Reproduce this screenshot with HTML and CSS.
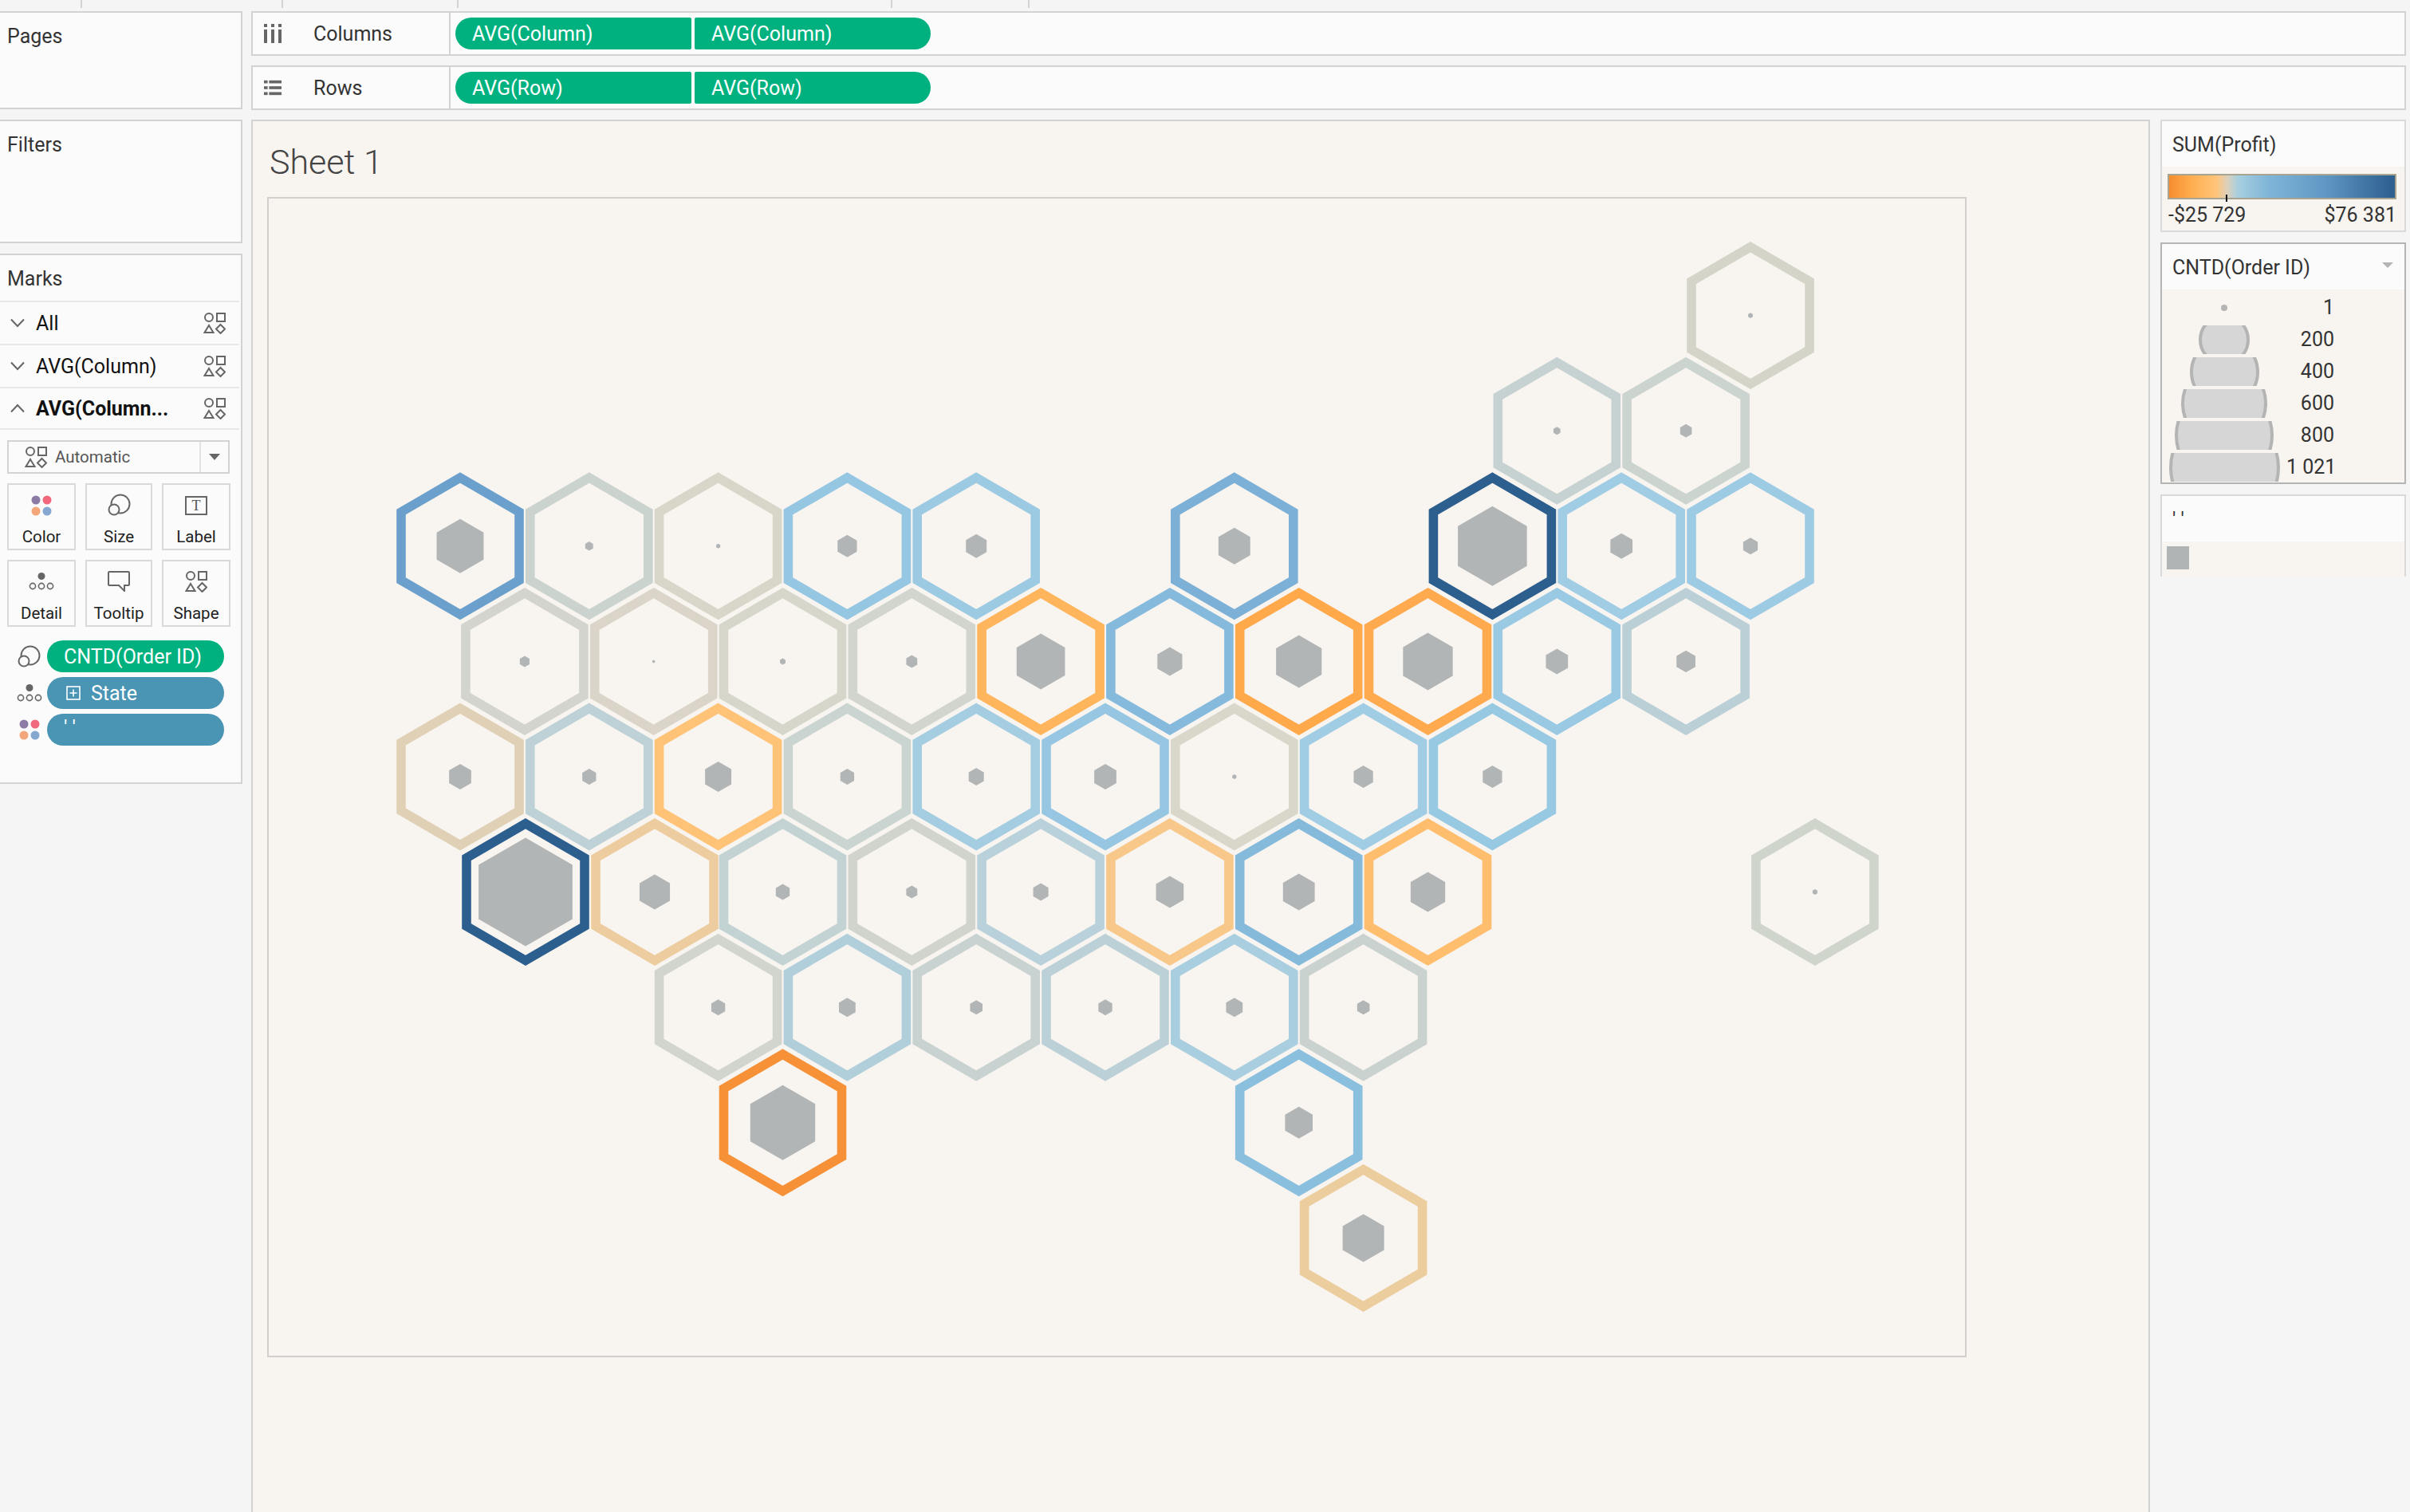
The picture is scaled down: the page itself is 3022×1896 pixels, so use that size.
FILE: index.html
```html
<!DOCTYPE html>
<html lang="en">
<head>
<meta charset="utf-8">
<title>Sheet 1</title>
<link rel="stylesheet" href="styles.css">
</head>
<body>
<svg class="defs" width="0" height="0" aria-hidden="true">
  <defs>
    <polygon id="h" points="0,-85.8 74,-42.8 74,42.8 0,85.8 -74,42.8 -74,-42.8"/>
    <polygon id="c" points="0,-1 .866,-.5 .866,.5 0,1 -.866,.5 -.866,-.5"/>
    <symbol id="i-shape" viewBox="0 0 28 28">
      <g fill="none" stroke="#666" stroke-width="2">
        <circle cx="7" cy="7" r="5"/>
        <rect x="17" y="2" width="10" height="10"/>
        <path d="M7 17 L12.5 26 H1.5 Z"/>
        <path d="M21.5 16 L27 21.5 L21.5 27 L16 21.5 Z"/>
      </g>
    </symbol>
    <symbol id="i-size" viewBox="0 0 30 28">
      <g fill="none" stroke="#666" stroke-width="2">
        <circle cx="17" cy="13" r="11.5"/>
        <circle cx="9" cy="20" r="6.5" fill="#fbfbfb"/>
      </g>
    </symbol>
    <symbol id="i-color" viewBox="0 0 26 26">
      <circle cx="6" cy="6" r="5.5" fill="#8b7ba5"/>
      <circle cx="20" cy="6" r="5.5" fill="#f2697e"/>
      <circle cx="6" cy="20" r="5.5" fill="#f2a679"/>
      <circle cx="20" cy="20" r="5.5" fill="#86a8d0"/>
    </symbol>
    <symbol id="i-detail" viewBox="0 0 32 22">
      <circle cx="16" cy="4.5" r="4.5" fill="#666"/>
      <g fill="none" stroke="#666" stroke-width="1.6">
        <circle cx="5" cy="17" r="3.6"/>
        <circle cx="16" cy="17" r="3.6"/>
        <circle cx="27" cy="17" r="3.6"/>
      </g>
    </symbol>
    <symbol id="i-plus" viewBox="0 0 18 18">
      <g fill="none" stroke="#fff" stroke-width="1.6">
        <rect x="1" y="1" width="16" height="16"/>
        <path d="M9 4.5 V13.5 M4.5 9 H13.5"/>
      </g>
    </symbol>
    <symbol id="i-chev" viewBox="0 0 20 12">
      <path d="M2 1.5 L10 10 L18 1.5" fill="none" stroke="#666" stroke-width="2"/>
    </symbol>
  </defs>
</svg>

<div class="tabs">
  <span class="tab tab-a"></span>
  <span class="tab tab-b"></span>
  <span class="tab tab-c"></span>
  <span class="tab tab-d"></span>
  <span class="tab tab-e"></span>
</div>

<div class="work">
  <aside class="left">
    <section class="panel pages"><h2 class="panel-title">Pages</h2></section>
    <section class="panel filters"><h2 class="panel-title">Filters</h2></section>
    <section class="panel marks">
      <h2 class="panel-title marks-title">Marks</h2>
      <div class="mark-row">
        <svg class="chev"><use href="#i-chev"/></svg><span class="mark-name">All</span>
        <svg class="mark-shape"><use href="#i-shape"/></svg>
      </div>
      <div class="mark-row">
        <svg class="chev"><use href="#i-chev"/></svg><span class="mark-name">AVG(Column)</span>
        <svg class="mark-shape"><use href="#i-shape"/></svg>
      </div>
      <div class="mark-row mark-row-last">
        <svg class="chev chev-up"><use href="#i-chev"/></svg><span class="mark-name mark-bold">AVG(Column...</span>
        <svg class="mark-shape"><use href="#i-shape"/></svg>
      </div>
      <div class="select">
        <svg class="select-icon"><use href="#i-shape"/></svg>
        <span class="select-text">Automatic</span>
        <span class="select-arrow"><span class="caret"></span></span>
      </div>
      <div class="cards">
        <div class="card"><svg class="card-icon ic-color"><use href="#i-color"/></svg><span>Color</span></div>
        <div class="card"><svg class="card-icon ic-size"><use href="#i-size"/></svg><span>Size</span></div>
        <div class="card">
          <div class="card-icon ic-label"><span class="label-t">T</span></div><span>Label</span>
        </div>
        <div class="card"><svg class="card-icon ic-detail"><use href="#i-detail"/></svg><span>Detail</span></div>
        <div class="card">
          <svg class="card-icon ic-tip" viewBox="0 0 28 26">
            <path d="M2 1 H26 a1 1 0 0 1 1 1 V17 a1 1 0 0 1 -1 1 H21 V25 L14 18 H2 a1 1 0 0 1 -1 -1 V2 a1 1 0 0 1 1 -1 Z" fill="none" stroke="#666" stroke-width="2"/>
          </svg><span>Tooltip</span>
        </div>
        <div class="card"><svg class="card-icon ic-shape"><use href="#i-shape"/></svg><span>Shape</span></div>
      </div>
      <div class="fields">
        <div class="field"><svg class="field-icon fi-size"><use href="#i-size"/></svg><span class="pill pill-green">CNTD(Order ID)</span></div>
        <div class="field"><svg class="field-icon fi-detail"><use href="#i-detail"/></svg><span class="pill pill-blue"><svg class="plus"><use href="#i-plus"/></svg>State</span></div>
        <div class="field"><svg class="field-icon fi-color"><use href="#i-color"/></svg><span class="pill pill-blue pill-quote">' '</span></div>
      </div>
    </section>
  </aside>

  <main class="main">
    <div class="shelf">
      <div class="shelf-head">
        <svg class="shelf-icon" viewBox="0 0 22 24"><g fill="#666"><rect x="0" y="0" width="4" height="4"/><rect x="9" y="0" width="4" height="4"/><rect x="18" y="0" width="4" height="4"/><rect x="0" y="7" width="4" height="17"/><rect x="9" y="7" width="4" height="17"/><rect x="18" y="7" width="4" height="17"/></g></svg>
        <span class="shelf-name">Columns</span>
      </div>
      <div class="shelf-pills">
        <span class="shelf-pill first">AVG(Column)</span><span class="shelf-pill last">AVG(Column)</span>
      </div>
    </div>
    <div class="shelf">
      <div class="shelf-head">
        <svg class="shelf-icon" viewBox="0 0 24 20"><g fill="#666"><rect x="0" y="0" width="5" height="4"/><rect x="7" y="0" width="17" height="4"/><rect x="0" y="8" width="5" height="4"/><rect x="7" y="8" width="17" height="4"/><rect x="0" y="16" width="5" height="4"/><rect x="7" y="16" width="17" height="4"/></g></svg>
        <span class="shelf-name">Rows</span>
      </div>
      <div class="shelf-pills">
        <span class="shelf-pill first">AVG(Row)</span><span class="shelf-pill last">AVG(Row)</span>
      </div>
    </div>

    <div class="content">
      <div class="canvas">
        <h1 class="sheet-title">Sheet 1</h1>
        <div class="plot">
          <svg class="map" viewBox="337 249 2127 1451">
            <g transform="translate(2195 395.6)"><use class="ring" href="#h" stroke="#d4d4c8"/><use class="core" href="#c" transform="scale(3.4)"/></g>

            <g transform="translate(1952.3 540.2)"><use class="ring" href="#h" stroke="#c6d2d2"/><use class="core" href="#c" transform="scale(5)"/></g>
            <g transform="translate(2114.1 540.2)"><use class="ring" href="#h" stroke="#cbd4cf"/><use class="core" href="#c" transform="scale(8.4)"/></g>

            <g transform="translate(577 684.8)"><use class="ring" href="#h" stroke="#6aa0cb"/><use class="core" href="#c" transform="scale(34)"/></g>
            <g transform="translate(738.8 684.8)"><use class="ring" href="#h" stroke="#cbd3cf"/><use class="core" href="#c" transform="scale(5.7)"/></g>
            <g transform="translate(900.6 684.8)"><use class="ring" href="#h" stroke="#d8d6c9"/><use class="core" href="#c" transform="scale(3)"/></g>
            <g transform="translate(1062.4 684.8)"><use class="ring" href="#h" stroke="#95c6e2"/><use class="core" href="#c" transform="scale(14)"/></g>
            <g transform="translate(1224.2 684.8)"><use class="ring" href="#h" stroke="#9ccae3"/><use class="core" href="#c" transform="scale(15)"/></g>
            <g transform="translate(1547.8 684.8)"><use class="ring" href="#h" stroke="#7db0d6"/><use class="core" href="#c" transform="scale(23)"/></g>
            <g transform="translate(1871.4 684.8)"><use class="ring" href="#h" stroke="#2c5e8e"/><use class="core" href="#c" transform="scale(50)"/></g>
            <g transform="translate(2033.2 684.8)"><use class="ring" href="#h" stroke="#a0cce4"/><use class="core" href="#c" transform="scale(16)"/></g>
            <g transform="translate(2195 684.8)"><use class="ring" href="#h" stroke="#9ecbe4"/><use class="core" href="#c" transform="scale(10.5)"/></g>

            <g transform="translate(657.9 829.4)"><use class="ring" href="#h" stroke="#d2d4cd"/><use class="core" href="#c" transform="scale(7)"/></g>
            <g transform="translate(819.7 829.4)"><use class="ring" href="#h" stroke="#dad5c8"/><use class="core" href="#c" transform="scale(2)"/></g>
            <g transform="translate(981.5 829.4)"><use class="ring" href="#h" stroke="#d6d6cb"/><use class="core" href="#c" transform="scale(4)"/></g>
            <g transform="translate(1143.3 829.4)"><use class="ring" href="#h" stroke="#d1d5cd"/><use class="core" href="#c" transform="scale(8)"/></g>
            <g transform="translate(1305.1 829.4)"><use class="ring" href="#h" stroke="#ffb55c"/><use class="core" href="#c" transform="scale(35)"/></g>
            <g transform="translate(1466.9 829.4)"><use class="ring" href="#h" stroke="#85badd"/><use class="core" href="#c" transform="scale(18)"/></g>
            <g transform="translate(1628.7 829.4)"><use class="ring" href="#h" stroke="#ffa94b"/><use class="core" href="#c" transform="scale(33)"/></g>
            <g transform="translate(1790.5 829.4)"><use class="ring" href="#h" stroke="#ffaa4e"/><use class="core" href="#c" transform="scale(36)"/></g>
            <g transform="translate(1952.3 829.4)"><use class="ring" href="#h" stroke="#99c9e3"/><use class="core" href="#c" transform="scale(16)"/></g>
            <g transform="translate(2114.1 829.4)"><use class="ring" href="#h" stroke="#bbcfd7"/><use class="core" href="#c" transform="scale(13.7)"/></g>

            <g transform="translate(577 974)"><use class="ring" href="#h" stroke="#e0d1b6"/><use class="core" href="#c" transform="scale(16)"/></g>
            <g transform="translate(738.8 974)"><use class="ring" href="#h" stroke="#bdd1d6"/><use class="core" href="#c" transform="scale(10)"/></g>
            <g transform="translate(900.6 974)"><use class="ring" href="#h" stroke="#ffc378"/><use class="core" href="#c" transform="scale(19)"/></g>
            <g transform="translate(1062.4 974)"><use class="ring" href="#h" stroke="#cad4d0"/><use class="core" href="#c" transform="scale(10)"/></g>
            <g transform="translate(1224.2 974)"><use class="ring" href="#h" stroke="#a5cde2"/><use class="core" href="#c" transform="scale(11)"/></g>
            <g transform="translate(1386 974)"><use class="ring" href="#h" stroke="#97c6e2"/><use class="core" href="#c" transform="scale(16)"/></g>
            <g transform="translate(1547.8 974)"><use class="ring" href="#h" stroke="#d9d7ca"/><use class="core" href="#c" transform="scale(3)"/></g>
            <g transform="translate(1709.6 974)"><use class="ring" href="#h" stroke="#a0cce4"/><use class="core" href="#c" transform="scale(14)"/></g>
            <g transform="translate(1871.4 974)"><use class="ring" href="#h" stroke="#98c9e3"/><use class="core" href="#c" transform="scale(14)"/></g>

            <g transform="translate(659 1118.6)"><use class="ring" href="#h" stroke="#2c5e8e"/><use class="core" href="#c" transform="scale(68)"/></g>
            <g transform="translate(821 1118.6)"><use class="ring" href="#h" stroke="#edcd9f"/><use class="core" href="#c" transform="scale(22)"/></g>
            <g transform="translate(981.5 1118.6)"><use class="ring" href="#h" stroke="#c3d3d4"/><use class="core" href="#c" transform="scale(10)"/></g>
            <g transform="translate(1143.3 1118.6)"><use class="ring" href="#h" stroke="#d1d4cc"/><use class="core" href="#c" transform="scale(8)"/></g>
            <g transform="translate(1305.1 1118.6)"><use class="ring" href="#h" stroke="#b8d1da"/><use class="core" href="#c" transform="scale(11)"/></g>
            <g transform="translate(1466.9 1118.6)"><use class="ring" href="#h" stroke="#f8c88b"/><use class="core" href="#c" transform="scale(20)"/></g>
            <g transform="translate(1628.7 1118.6)"><use class="ring" href="#h" stroke="#85badb"/><use class="core" href="#c" transform="scale(23)"/></g>
            <g transform="translate(1790.5 1118.6)"><use class="ring" href="#h" stroke="#ffbe6e"/><use class="core" href="#c" transform="scale(25)"/></g>
            <g transform="translate(2275.9 1118.6)"><use class="ring" href="#h" stroke="#d0d5cc"/><use class="core" href="#c" transform="scale(3.5)"/></g>

            <g transform="translate(900.6 1263.2)"><use class="ring" href="#h" stroke="#d1d5ce"/><use class="core" href="#c" transform="scale(10)"/></g>
            <g transform="translate(1062.4 1263.2)"><use class="ring" href="#h" stroke="#b1cfdb"/><use class="core" href="#c" transform="scale(12)"/></g>
            <g transform="translate(1224.2 1263.2)"><use class="ring" href="#h" stroke="#c7d2d1"/><use class="core" href="#c" transform="scale(9)"/></g>
            <g transform="translate(1386 1263.2)"><use class="ring" href="#h" stroke="#bcd1d7"/><use class="core" href="#c" transform="scale(10)"/></g>
            <g transform="translate(1547.8 1263.2)"><use class="ring" href="#h" stroke="#a9cedf"/><use class="core" href="#c" transform="scale(12)"/></g>
            <g transform="translate(1709.6 1263.2)"><use class="ring" href="#h" stroke="#c9d2cf"/><use class="core" href="#c" transform="scale(9)"/></g>

            <g transform="translate(981.5 1407.8)"><use class="ring" href="#h" stroke="#f79137"/><use class="core" href="#c" transform="scale(47)"/></g>
            <g transform="translate(1628.7 1407.8)"><use class="ring" href="#h" stroke="#8bbfde"/><use class="core" href="#c" transform="scale(20)"/></g>

            <g transform="translate(1709.6 1552.4)"><use class="ring" href="#h" stroke="#eccd9e"/><use class="core" href="#c" transform="scale(30)"/></g>
          </svg>
        </div>
      </div>

      <aside class="legends">
        <section class="legend legend-profit">
          <h3 class="legend-title">SUM(Profit)</h3>
          <div class="legend-body profit-body">
            <div class="ramp"><span class="ramp-tick"></span></div>
            <div class="ramp-labels"><span>-$25 729</span><span>$76 381</span></div>
          </div>
        </section>
        <section class="legend legend-size">
          <h3 class="legend-title">CNTD(Order ID)<span class="legend-caret"></span></h3>
          <div class="legend-body size-body">
            <div class="size-row"><span class="size-swatch"><span class="size-dot"></span></span><span class="size-num">1</span></div>
            <div class="size-row"><span class="size-swatch"><span class="size-disc d200"></span></span><span class="size-num">200</span></div>
            <div class="size-row"><span class="size-swatch"><span class="size-disc d400"></span></span><span class="size-num">400</span></div>
            <div class="size-row"><span class="size-swatch"><span class="size-disc d600"></span></span><span class="size-num">600</span></div>
            <div class="size-row"><span class="size-swatch"><span class="size-disc d800"></span></span><span class="size-num">800</span></div>
            <div class="size-row"><span class="size-swatch"><span class="size-disc d1021"></span></span><span class="size-num">1 021</span></div>
          </div>
        </section>
        <section class="legend legend-shape">
          <h3 class="legend-title">' '</h3>
          <div class="legend-body shape-body"><span class="shape-swatch"></span></div>
        </section>
      </aside>
    </div>
  </main>
</div>
</body>
</html>
```

FILE: styles.css
```css
* { box-sizing: border-box; }
html, body { margin: 0; padding: 0; }
body {
  width: 3022px;
  height: 1896px;
  overflow: hidden;
  background: #f5f5f5;
  font-family: Roboto, "Liberation Sans", sans-serif;
  font-size: 25px;
  color: #333;
}
.defs { position: absolute; }

/* top tick strip */
.tabs { display: flex; height: 14px; padding-left: 101px; }
.tab { height: 10px; border-right: 2px solid #d3d3d3; }
.tab-a { width: 2px; }
.tab-b { width: 252px; }
.tab-c { width: 220px; }
.tab-d { width: 544px; }
.tab-e { width: 172px; }

.work { display: flex; gap: 11px; height: 1882px; }

/* left column */
.left { width: 304px; flex: none; display: flex; flex-direction: column; gap: 13px; }
.panel {
  background: #fbfbfb;
  border: 2px solid #d3d3d3;
  border-left: 0;
}
.pages { height: 123px; }
.filters { height: 155px; }
.marks { height: 665px; }
.panel-title { margin: 0; padding: 14px 0 0 9px; font-size: 25px; font-weight: 400; line-height: 32px; color: #333; }
.marks-title { height: 57px; }
.mark-row {
  display: flex;
  align-items: center;
  height: 54px;
  margin-right: 2px;
  border-top: 2px solid #e9e9e9;
}
.mark-row-last { border-bottom: 2px solid #e9e9e9; }
.chev { width: 20px; height: 12px; margin-left: 12px; flex: none; }
.chev-up { transform: scaleY(-1); }
.mark-name { margin-left: 13px; font-size: 25px; color: #111; white-space: nowrap; }
.mark-bold { font-weight: 700; }
.mark-shape { width: 28px; height: 28px; margin-left: auto; margin-right: 17px; flex: none; }

.select {
  display: flex;
  align-items: center;
  height: 42px;
  margin: 13px 14px 0 9px;
  border: 2px solid #d3d3d3;
  background: #fbfbfb;
}
.select-icon { width: 28px; height: 28px; margin-left: 20px; flex: none; }
.select-text { margin-left: 10px; font-size: 20.5px; color: #555; }
.select-arrow {
  margin-left: auto;
  width: 36px;
  height: 100%;
  border-left: 2px solid #e3e3e3;
  display: flex;
  align-items: center;
  justify-content: center;
}
.caret { width: 0; height: 0; border: 7px solid transparent; border-top: 8px solid #666; border-bottom: 0; }

.cards {
  display: grid;
  grid-template-columns: 86px 84px 86px;
  column-gap: 12px;
  row-gap: 12px;
  margin: 12px 0 0 9px;
}
.card {
  height: 84px;
  border: 2px solid #d9d9d9;
  display: flex;
  flex-direction: column;
  align-items: center;
  font-size: 20.5px;
  color: #222;
}
.card span { line-height: 24px; }
.card-icon { display: block; flex: none; }
.ic-color { width: 26px; height: 26px; margin: 13px 0 14px; }
.ic-size { width: 30px; height: 28px; margin: 11px 0 14px; }
.ic-label {
  width: 28px; height: 24px;
  margin: 14px 0 15px;
  border: 2px solid #666;
  display: flex;
  align-items: center;
  justify-content: center;
}
.card .label-t { font-family: "Liberation Serif", serif; font-size: 18px; line-height: 18px; color: #555; }
.ic-detail { width: 32px; height: 22px; margin: 14px 0 17px; }
.ic-tip { width: 28px; height: 26px; margin: 12px 0 15px; }
.ic-shape { width: 28px; height: 28px; margin: 11px 0 14px; }

.fields { display: flex; flex-direction: column; gap: 6px; margin: 17px 0 0 21px; }
.field { display: flex; align-items: center; height: 40px; }
.field-icon { flex: none; }
.fi-size { width: 30px; height: 28px; }
.fi-detail { width: 32px; height: 22px; }
.fi-color { width: 26px; height: 26px; margin-left: 3px; }
.pill {
  display: flex;
  align-items: center;
  width: 222px;
  height: 40px;
  margin-left: auto;
  margin-right: 21px;
  border-radius: 20px;
  color: #fff;
  font-size: 25px;
  white-space: nowrap;
}
.pill-green { background: #00b180; padding-left: 21px; }
.pill-blue { background: #4a95b3; padding-left: 24px; }
.plus { width: 18px; height: 18px; margin-right: 13px; flex: none; }
.pill-quote { align-items: flex-start; line-height: 36px; padding-left: 21px; }

/* main */
.main { flex: 1; min-width: 0; padding-right: 5px; display: flex; flex-direction: column; gap: 12px; }
.shelf {
  display: flex;
  height: 56px;
  background: #fbfbfb;
  border: 2px solid #d3d3d3;
}
.shelf-head {
  width: 248px;
  flex: none;
  display: flex;
  align-items: center;
  border-right: 2px solid #d3d3d3;
}
.shelf-icon { width: 22px; height: 24px; margin-left: 14px; flex: none; }
.shelf-name { margin-left: 40px; color: #333; }
.shelf-pills { display: flex; align-items: center; gap: 4px; padding-left: 6px; }
.shelf-pill {
  display: flex;
  align-items: center;
  height: 40px;
  width: 296px;
  padding-left: 21px;
  background: #00b180;
  border-radius: 2px;
  color: #fff;
  font-size: 25px;
}
.shelf-pill.first { border-radius: 20px 2px 2px 20px; }
.shelf-pill.last { border-radius: 2px 20px 20px 2px; }

.content { flex: 1; display: flex; gap: 13px; min-height: 0; }
.canvas {
  width: 2381px;
  flex: none;
  background: #f8f4f0;
  border: 2px solid #d3d3d3;
  border-bottom: 0;
  padding-left: 18px;
}
.sheet-title { margin: 0; padding-left: 3px; height: 95px; padding-top: 26px; font-size: 43px; line-height: 50px; font-weight: 300; color: #444; }
.plot { width: 2131px; height: 1455px; border: 2px solid #d2d0cc; }
.map { display: block; width: 100%; height: 100%; }
.ring { fill: none; stroke-width: 11.6; stroke-linejoin: miter; }
.core { fill: #b2b5b6; }

/* legends */
.legends { width: 308px; flex: none; display: flex; flex-direction: column; }
.legend { border: 2px solid #d9d9d9; background: #fbfbfb; }
.legend-title {
  position: relative;
  margin: 0;
  height: 57px;
  padding: 14px 0 0 13px;
  font-size: 25px;
  line-height: 32px;
  font-weight: 400;
  color: #333;
  white-space: nowrap;
}
.legend-body { background: #f8f4f0; }
.legend-profit { height: 141px; }
.profit-body { height: 80px; padding: 9px 10px 0 7px; }
.ramp {
  position: relative;
  height: 32px;
  border: 2px solid #a9a491;
  background: linear-gradient(to right, #f68d2e 0%, #ffae50 10%, #ffc47a 21%, #ddd0ba 25.7%, #a8cfdf 30.4%, #7fb5d8 44%, #6199c5 68%, #2c5e8e 100%);
}
.ramp-tick { position: absolute; left: 71px; top: 24px; width: 2px; height: 9px; background: #111; }
.ramp-labels { display: flex; justify-content: space-between; margin: 4px 0 0 1px; font-size: 25px; line-height: 32px; color: #333; }
.legend-size { height: 303px; margin-top: 13px; border-color: #b4b4b4; }
.legend-caret {
  position: absolute;
  right: 14px;
  top: 23px;
  width: 0;
  height: 0;
  border: 7px solid transparent;
  border-top: 7px solid #b4b4b4;
  border-bottom: 0;
}
.size-body { height: 242px; padding-top: 3px; }
.size-row { display: flex; align-items: center; height: 40px; }
.size-swatch {
  width: 156px;
  height: 36px;
  overflow: hidden;
  display: flex;
  align-items: center;
  justify-content: center;
  flex: none;
}
.size-dot { width: 8px; height: 8px; border-radius: 50%; background: #b4b4b4; }
.size-disc { flex: none; border-radius: 50%; background: #d6d6d6; border: 4px solid #b4b4b4; }
.d200 { width: 64px; height: 64px; }
.d400 { width: 87px; height: 87px; }
.d600 { width: 108px; height: 108px; }
.d800 { width: 124px; height: 124px; }
.d1021 { width: 139px; height: 139px; }
.size-num { width: 60px; text-align: right; font-size: 25px; line-height: 32px; color: #333; white-space: nowrap; }
.legend-shape { height: 103px; margin-top: 13px; }
.shape-body { height: 44px; padding: 6px 0 0 6px; }
.shape-swatch { display: block; width: 28px; height: 29px; background: #b1b4b5; }
```
